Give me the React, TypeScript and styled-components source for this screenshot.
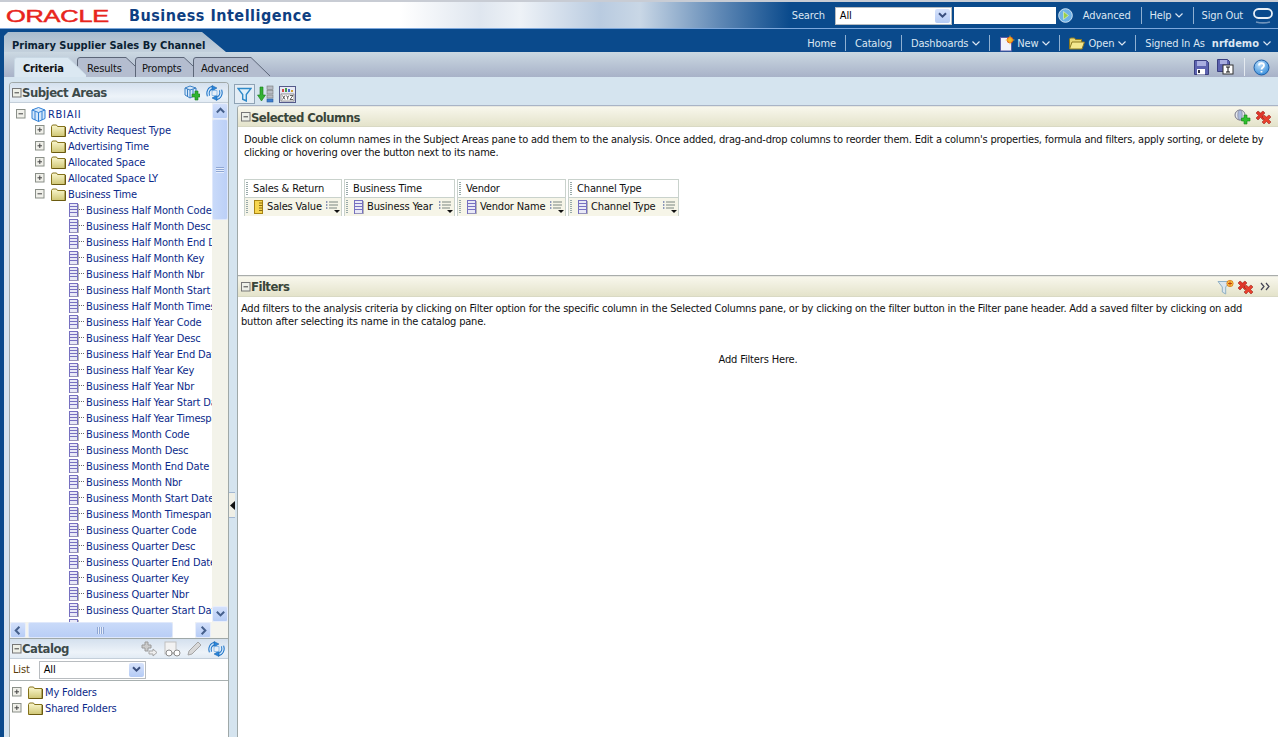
import React from "react";
import styled, { createGlobalStyle } from "styled-components";

const FONT = `"DejaVu Sans Condensed", "DejaVu Sans", sans-serif`;

const Global = createGlobalStyle`
  html, body { margin: 0; padding: 0; background: #0a4a8c; }
  body { font-family: ${FONT}; font-stretch: condensed; font-size: 11px; overflow: hidden; letter-spacing: -.15px; }
  * { box-sizing: border-box; }
`;

const Page = styled.div`
  width: 1278px; height: 737px; display: flex; flex-direction: column; overflow: hidden; background: #0a4a8c;
`;
const TopBar = styled.div`
  height: 29px; flex: none; display: flex; align-items: center; padding: 2px 0 1px 6px;
  border-top: 2px solid #c8ccd4; border-bottom: 1px solid #7ea8dc;
  background: linear-gradient(90deg, #fff 0, #fff 400px, #dfe6ef 480px, #eef2f7 520px, #b9cbe0 600px, #c9d7e6 640px, #5f88b5 720px, #0a4a8c 790px);
`;
const Logo = styled.svg`
  width: 105px; height: 18px; flex: none;
`;
const AppTitle = styled.div`
  margin-left: 18px; font-size: 16px; font-weight: bold; color: #0f3f82; letter-spacing: .5px; flex: 1;
`;
const TopLink = styled.span`
  color: #dbe6f2; font-size: 11px; white-space: nowrap;
`;
const SearchLabel = styled(TopLink)`margin-right: 10px;`;
const AdvancedLink = styled(TopLink)`margin-left: 10px;`;
const SelectBox = styled.div<{ $w: number; $h?: number }>`
  width: ${p => p.$w}px; height: ${p => p.$h ?? 18}px; flex: none; background: #fff; border: 1px solid #b8bcc0;
  display: flex; align-items: center; justify-content: space-between; padding: 0 1px 0 4px;
  font-size: 11px; color: #000;
`;
const SelectArrow = styled.span`
  width: 15px; height: 14px; display: flex; align-items: center; justify-content: center;
  background: linear-gradient(#d6e2fb, #b5cbf5); border-radius: 2px;
`;
const SearchInput = styled.div`
  width: 102px; height: 17px; background: #fff; margin-left: 2px; flex: none;
`;
const Sep = styled.span<{ $l?: number; $r?: number; $h?: number }>`
  width: 1px; height: ${p => p.$h ?? 17}px; background: #8fb0d2; flex: none;
  margin: 0 ${p => p.$r ?? 8}px 0 ${p => p.$l ?? 8}px;
`;
const TopRight = styled.div`display: flex; align-items: center; padding-right: 5px;`;
const NavRow = styled.div`
  height: 23px; flex: none; display: flex; justify-content: space-between; background: #0a4a8c;
`;
const TitleTab = styled.div`
  width: 226px; margin-left: 4px; margin-top: 3px; padding: 7px 0 0 8px;
  background: linear-gradient(#a9bccd, #c3d0dc);
  clip-path: polygon(0 4px, 4px 0, 198px 0, 222px 20px, 226px 20px, 0 20px);
  font-weight: bold; font-size: 11px; color: #0a1f33; white-space: nowrap; letter-spacing: 0;
`;
const NavLinks = styled.div`display: flex; align-items: center; padding-right: 7px; padding-top: 5px;`;
const NavText = styled.span`
  color: #dbe6f2; font-size: 11px; white-space: nowrap; display: inline-flex; align-items: center;
`;
const NavBold = styled.b`margin-left: 7px; color: #dbe6f2; letter-spacing: 0;`;
const TabRow = styled.div`
  height: 25px; flex: none; margin-left: 4px; display: flex; align-items: flex-end; justify-content: space-between;
  padding-left: 10px; background: linear-gradient(#cbd8e2, #a8b2c8);
`;
const Tabs = styled.div`display: flex; height: 20px;`;
const TabItem = styled.div<{ $w: number; $active?: boolean; $pad: number }>`
  position: relative; width: ${p => p.$w}px; padding: 5px 0 0 ${p => p.$pad}px; color: #111;
  font-weight: ${p => p.$active ? "bold" : "normal"}; font-size: 11px; white-space: nowrap;
  margin-right: ${p => p.$active ? "-9px" : "0"};
  z-index: ${p => p.$active ? 2 : 1};
`;
const TabShape = styled.svg`position: absolute; inset: 0; width: 100%; height: 100%; z-index: -1;`;
const TabIcons = styled.div`display: flex; align-items: center; height: 25px; padding-right: 8px; gap: 8px; padding-top: 5px;`;
const IconSep = styled.span`width: 1px; height: 18px; background: #e4eaf0; margin-left: 2px;`;

const Body = styled.div`
  flex: 1; min-height: 0; margin-left: 4px; background: #d5e4ef; display: flex; padding: 5px 0 0 5px;
`;
const LeftPanel = styled.div`
  width: 220px; flex: none; display: flex; flex-direction: column; background: #fff;
  border: 1px solid #9fa8a8; border-bottom: 0; border-radius: 4px 4px 0 0; overflow: hidden;
`;
const PaneHeader = styled.div<{ $h: number; $pr: number }>`
  height: ${p => p.$h}px; flex: none; display: flex; align-items: center; padding: 0 ${p => p.$pr}px 0 2px;
  background: linear-gradient(#d4e0ee, #edf3f9 70%, #e2ebf4); border-bottom: 1px solid #c4cfda;
`;
const PaneTitle = styled.span`
  font-size: 13px; font-weight: bold; color: #3d4a4a; margin-left: 0; flex: 1; white-space: nowrap;
  font-stretch: normal; letter-spacing: -.5px;
`;
const PaneIcons = styled.div<{ $gap: number }>`display: flex; align-items: center; gap: ${p => p.$gap}px;`;
const TreeWrap = styled.div`flex: none; height: 519px; display: flex; overflow: hidden;`;
const Tree = styled.div`flex: 1; min-width: 0; overflow: hidden; padding-top: 3px;`;
const Row = styled.div<{ $indent: number }>`
  height: 16px; display: flex; align-items: center; padding-left: ${p => p.$indent}px;
  color: #0b2a8a; font-size: 11px; white-space: nowrap;
`;
const RowLabel = styled.span`margin-left: 2px;`;
const RootLabel = styled(RowLabel)`letter-spacing: .7px;`;
const VScroll = styled.div`
  width: 16px; flex: none; display: flex; flex-direction: column; background: #f3f3ea;
`;
const SBtn = styled.div<{ $w?: number; $h?: number }>`
  width: ${p => p.$w ?? 16}px; height: ${p => p.$h ?? 16}px; flex: none; display: flex; align-items: center; justify-content: center;
  background: linear-gradient(#d3e0fb, #b7cdf6); border: 1px solid #e8eefb; border-radius: 2px;
`;
const VThumb = styled.div`
  height: 101px; flex: none; display: flex; align-items: center; justify-content: center;
  background: linear-gradient(90deg, #c9daf9, #bcd0f7); border: 1px solid #dfe8fb; border-radius: 2px;
`;
const VTrack = styled.div`flex: 1;`;
const HScroll = styled.div`
  height: 17px; flex: none; display: flex; align-items: center; background: #f4f4ee; padding-right: 17px; border-bottom: 1px solid #9fa8a8;
`;
const HThumb = styled.div`
  width: 145px; height: 16px; margin-left: 2px; display: flex; align-items: center; justify-content: center;
  background: linear-gradient(#c9daf9, #b9cef6); border: 1px solid #dfe8fb; border-radius: 2px;
`;
const HTrack = styled.div`flex: 1; background: #fff; align-self: stretch;`;
const Grip = styled.span<{ $v?: boolean }>`
  width: ${p => p.$v ? 8 : 7}px; height: ${p => p.$v ? 6 : 7}px;
  background: ${p => p.$v
    ? "repeating-linear-gradient(#8ea6d4 0 1px, #e6edfb 1px 2px)"
    : "repeating-linear-gradient(90deg, #8ea6d4 0 1px, #e6edfb 1px 2px)"};
`;
const ListRow = styled.div`
  height: 22px; flex: none; display: flex; align-items: center; padding-left: 3px; gap: 9px;
  border-bottom: 1px solid #a8b0b0; color: #5a3c08; font-size: 11px;
`;
const CatalogTree = styled.div`padding-top: 3px; flex: 1;`;
const Splitter = styled.div`
  width: 8px; flex: none; display: flex; align-items: flex-start; padding-top: 410px;
`;
const SplitHandle = styled.div`
  width: 6px; height: 26px; display: flex; align-items: center; justify-content: center; background: #efefe6;
  border-top: 1px solid #a3b8d2; border-bottom: 1px solid #a3b8d2;
`;
const RightCol = styled.div`flex: 1; min-width: 0; display: flex; flex-direction: column; margin-left: -4px;`;
const ToolBar = styled.div`
  height: 23px; flex: none; display: flex; align-items: center; gap: 2px; padding: 1px 0 0 1px;
`;
const ToolActive = styled.span`
  width: 21px; height: 20px; display: flex; align-items: center; justify-content: center;
  border: 1px solid #8fa3b5; background: #e4edf5;
`;
const RightPanel = styled.div`
  flex: 1; min-height: 0; margin-left: 4px; background: #fff; display: flex; flex-direction: column;
  border-left: 1px solid #9fa8a8; border-top: 1px solid #a9b4c6; border-radius: 4px 0 0 0; overflow: hidden;
`;
const BeigeHeader = styled.div<{ $pt: number }>`
  height: 21px; flex: none; display: flex; align-items: center; padding: ${p => p.$pt}px 6px 0 3px;
  background: linear-gradient(#f8f7ec, #e4e3cb); border-bottom: 1px solid #d9d9c4; border-top: 1px solid #e8e8e0;
`;
const BeigeTitle = styled.span`
  font-size: 13px; font-weight: bold; color: #39453a; flex: 1; margin-left: 0; font-stretch: normal; letter-spacing: -.55px;
`;
const Section = styled.div`height: 149px; flex: none; border-bottom: 1px solid #a9adab; padding: 6px 0 0 6px;`;
const Desc = styled.p`margin: 0; font-size: 11px; line-height: 13px; color: #111; white-space: nowrap; letter-spacing: -.2px;`;
const ColumnGrid = styled.div`display: flex; gap: 2px; margin-top: 20px;`;
const ColumnCard = styled.div<{ $w: number }>`
  width: ${p => p.$w}px; flex: none; border: 1px solid #c9d2cc; font-size: 11px; color: #111; height: 37px;
`;
const ColTop = styled.div`
  height: 18px; display: flex; align-items: center; padding-left: 8px; border-bottom: 1px solid #c9d2cc; position: relative;
  white-space: nowrap; background: #fff;
`;
const ColBottom = styled.div`
  height: 17.5px; display: flex; align-items: center; padding-left: 8px; gap: 3px; background: #f6f5e8; white-space: nowrap; position: relative;
`;
const DotGrip = styled.span`
  position: absolute; left: 1px; top: 2px; bottom: 2px; width: 2px;
  background: repeating-linear-gradient(#9aa 0 1px, transparent 1px 2px);
`;
const ColLabel = styled.span`flex: 1;`;
const MenuBtn = styled.span`margin-right: 1px; display: flex;`;
const FiltersBody = styled.div`flex: 1; padding: 5px 0 0 3px; position: relative;`;
const AddHere = styled.div`text-align: center; margin-top: 25px; color: #111; font-size: 11px; padding-right: 3px;`;

const Chev = ({ c = "#dbe6f2", m = 4 }: { c?: string; m?: number }) => (
  <svg width="8" height="5" viewBox="0 0 8 5" style={{ marginLeft: m }}><path d="M.5.5L4 4 7.500.5" fill="none" stroke={c} strokeWidth="1.200" /></svg>
);
const SelChev = () => (
  <svg width="9" height="7" viewBox="0 0 9 7"><path d="M1 1.200l3.500 3.500L8 1.200" fill="none" stroke="#3a4f7e" strokeWidth="2" /></svg>
);
const Expander = ({ open, m = 10 }: { open?: boolean; m?: number }) => (
  <svg width="10" height="10" viewBox="0 0 10 10" style={{ marginRight: m, flex: "none" }}>
    <rect x=".5" y=".5" width="8.500" height="8.500" fill="#f0f0ea" stroke="#8a8f88" />
    <path d={open ? "M2.500 4.800h4.500" : "M2.500 4.800h4.500M4.800 2.500v4.500"} stroke="#444" />
  </svg>
);
const Folder = () => (
  <svg width="15" height="13" viewBox="0 0 15 13" style={{ flex: "none" }}>
    <defs><linearGradient id="fg" x1="0" y1="0" x2="0" y2="1"><stop offset="0" stopColor="#fbf8cf" /><stop offset="1" stopColor="#cfc674" /></linearGradient></defs>
    <path d="M.5 2.500l1-1.500h4l1 1.500h7.500v10H.5z" fill="url(#fg)" stroke="#85721a" />
    <path d="M14.500 3v9.500H1.500" fill="none" stroke="#6a5a10" />
  </svg>
);
const ColumnIcon = ({ dots = true }: { dots?: boolean }) => (
  <svg width={dots ? 16 : 11} height="14" viewBox={`0 0 ${dots ? 16 : 11} 14`} style={{ flex: "none" }}>
    <rect x="1.500" y=".5" width="8" height="13" fill="#e9e9f7" stroke="#7670c0" />
    <path d="M1.500 3.500h8M1.500 6.500h8M1.500 9.500h8" stroke="#7670c0" />
    <path d="M10.500 1v13H2" fill="none" stroke="#b5b5b5" />
    {dots && <path d="M11 6.500h5" stroke="#666" strokeDasharray="1 1" />}
  </svg>
);
const MeasureIcon = () => (
  <svg width="11" height="14" viewBox="0 0 11 14" style={{ flex: "none" }}>
    <rect x="1.500" y=".5" width="8" height="13" fill="#f7d64f" stroke="#a88412" />
    <path d="M6 3h3.500M6 5.500h3.500M6 8h3.500M6 10.500h3.500" stroke="#8a6a10" />
  </svg>
);
const CubeIcon = () => (
  <svg width="15" height="15" viewBox="0 0 15 15" style={{ flex: "none" }}>
    <path d="M7.500.5l6.500 2.500v8.500l-6.500 3-6.500-3V3z" fill="#d6e8fb" stroke="#2f7fd4" />
    <path d="M1 3l6.500 2.500L14 3M7.500 5.500v9M4 4.500v8.500M11 4.500v8.500" fill="none" stroke="#2f7fd4" />
  </svg>
);
const AddCube = () => (
  <svg width="16" height="16" viewBox="0 0 16 16">
    <path d="M6 1l6 2v7l-6 3-5-3V3z" fill="#d6e8fb" stroke="#3a80c4" />
    <path d="M1 3l5 2 6-2M6 5v8M3.500 4v7M9 4v7" fill="none" stroke="#3a80c4" />
    <path d="M11 6v3H8v3h3v3h3v-3h2V9h-2V6z" fill="#2fb52f" stroke="#1b7a1b" strokeWidth=".6" />
  </svg>
);
const Refresh = () => (
  <svg width="17" height="16" viewBox="0 0 17 16">
    <path d="M2.500 11C1 7 3 3 7 2.500M14.500 5c1.500 4-.5 8-4.500 8.500" fill="none" stroke="#2276c8" strokeWidth="3.400" />
    <path d="M2.500 11C1 7 3 3 7 2.500M14.500 5c1.500 4-.5 8-4.500 8.500" fill="none" stroke="#cfe6fa" strokeWidth="1.400" />
    <path d="M6 .5l5 2.500-5 3zM11 15.500L6 13l5-3z" fill="#2a86dc" stroke="#145a9e" strokeWidth=".5" />
    <path d="M6 5.500h5v5H6z" fill="none" stroke="#7fb4e6" strokeWidth=".8" />
  </svg>
);
const Funnel = () => (
  <svg width="15" height="15" viewBox="0 0 15 15">
    <path d="M1 1.500h13L9.300 7.500v6.500l-3.600-1.800V7.500z" fill="#dff0fb" stroke="#2f8ac8" strokeWidth="1.400" />
  </svg>
);
const FilterAdd = () => (
  <svg width="18" height="16" viewBox="0 0 18 16">
    <path d="M1 2.500h12L8.700 8v7l-3.400-2V8z" fill="#dbe6ee" stroke="#8fb0c4" />
    <circle cx="13" cy="4.500" r="3.200" fill="#f5c542" stroke="#d96a12" strokeWidth=".7" />
    <path d="M13 2.500v4M11 4.500h4" stroke="#c43e10" />
  </svg>
);
const SortIcon = () => (
  <svg width="20" height="18" viewBox="0 0 20 18">
    <path d="M3 2h3v8h2.500L4.500 16 .5 10H3z" fill="#33b233" stroke="#1a7a1a" strokeWidth=".6" />
    <rect x="10" y="1" width="6" height="3.500" fill="#b8bcc4" stroke="#777" strokeWidth=".6" />
    <rect x="10" y="5.500" width="6" height="3.500" fill="#b8bcc4" stroke="#777" strokeWidth=".6" />
    <rect x="10" y="10" width="6" height="3" fill="#b8bcc4" stroke="#777" strokeWidth=".6" />
    <rect x="10" y="14" width="6" height="3" fill="#3f7fd0" stroke="#2a5a9a" strokeWidth=".6" />
  </svg>
);
const XyzIcon = () => (
  <svg width="17" height="17" viewBox="0 0 17 17">
    <rect x=".5" y=".5" width="16" height="16" fill="#e7e9f4" stroke="#545a8a" />
    <rect x="3" y="3" width="2" height="3" fill="#d04a4a" /><rect x="6" y="2" width="2" height="4" fill="#4a9a4a" />
    <rect x="9" y="3" width="2" height="3" fill="#4a6ad0" /><rect x="12" y="4" width="2" height="2" fill="#d0a030" />
    <rect x="2" y="8" width="13" height="7" fill="#fff" stroke="#333" strokeWidth=".5" />
    <path d="M3.500 9.500l2.500 4M6 9.500l-2.500 4M7.500 9.500l1.200 2 1.200-2M8.700 11.500v2M11 9.500h3l-3 4h3" fill="none" stroke="#222" strokeWidth=".7" />
  </svg>
);
const AddColumn = () => (
  <svg width="17" height="16" viewBox="0 0 17 16">
    <circle cx="6" cy="6" r="5" fill="#e4e9f0" stroke="#778" />
    <ellipse cx="6" cy="6" rx="2.200" ry="5" fill="#a9b9dc" stroke="#778" strokeWidth=".6" />
    <path d="M10 6v3H7.500v3H10v3h3v-3h3V9h-3V6z" fill="#2fc02f" stroke="#158015" strokeWidth=".6" />
  </svg>
);
const RemoveAll = () => (
  <svg width="17" height="14" viewBox="0 0 17 14">
    <path d="M1 3l2-2 2.500 2L8 1l2 2-2.500 2.500L10 8 8 10 5.500 7.500 3 10 1 8l2.500-2.500z" fill="#e0362a" stroke="#8f1a12" strokeWidth=".5" />
    <path d="M7 7l2-2 2.500 2L14 5l2 2-2.500 2.500L16 12l-2 2-2.500-2.500L9 14l-2-2 2.500-2.500z" fill="#e8402e" stroke="#8f1a12" strokeWidth=".5" />
  </svg>
);
const Collapse = () => (
  <svg width="10" height="10" viewBox="0 0 10 10" style={{ flex: "none" }}>
    <rect x=".5" y=".5" width="8.500" height="8.500" fill="#eef0e8" stroke="#777" />
    <path d="M2.500 4.800h4.500" stroke="#444" />
  </svg>
);
const Save = () => (
  <svg width="15" height="15" viewBox="0 0 15 15">
    <path d="M.5.5h12l2 2v12H.5z" fill="#5d63b0" stroke="#3a3f80" />
    <rect x="3" y="1" width="9" height="5" fill="#a9aee0" /><rect x="3" y="9" width="8" height="5.500" fill="#fff" /><rect x="4" y="10" width="2" height="3" fill="#334" />
  </svg>
);
const SaveAs = () => (
  <svg width="17" height="16" viewBox="0 0 17 16">
    <path d="M.5.5h10l2 2v10H.5z" fill="#5d63b0" stroke="#3a3f80" />
    <rect x="3" y="1" width="7" height="4" fill="#a9aee0" />
    <rect x="6" y="6" width="10" height="9" fill="#fff" stroke="#333" />
    <path d="M9 8h4M11 8v5M9 13h4" stroke="#111" />
  </svg>
);
const HelpIcon = () => (
  <svg width="17" height="17" viewBox="0 0 17 17">
    <defs><radialGradient id="hb" cx=".4" cy=".3" r=".8"><stop offset="0" stopColor="#bfe0fb" /><stop offset="1" stopColor="#2a86d8" /></radialGradient></defs>
    <circle cx="8.500" cy="8.500" r="7.500" fill="url(#hb)" stroke="#1d5fa8" />
    <path d="M6 6.500c0-3 5-3 5 0 0 2-2.500 2-2.500 4M8.500 12v1.500" fill="none" stroke="#fff" strokeWidth="1.800" />
  </svg>
);
const GoIcon = () => (
  <svg width="15" height="15" viewBox="0 0 15 15" style={{ marginLeft: 2, flex: "none" }}>
    <circle cx="7.500" cy="7.500" r="6.800" fill="#6fb2e6" stroke="#cfe4f6" />
    <path d="M5.500 3.500l5 4-5 4z" fill="#9ad04a" stroke="#e8f5d0" strokeWidth=".6" />
  </svg>
);
const OracleO = () => (
  <svg width="20" height="18" viewBox="0 0 20 18" style={{ marginLeft: 10 }}>
    <rect x="1" y="2" width="18" height="9" rx="4.500" fill="none" stroke="#e8eff6" strokeWidth="1.800" />
    <path d="M3 15c4 1 10 1 14 0" stroke="#6f93bb" strokeWidth="1.500" fill="none" />
  </svg>
);
const NewIcon = () => (
  <svg width="17" height="17" viewBox="0 0 17 17" style={{ marginRight: 1 }}>
    <rect x="1.500" y="2.500" width="11" height="13.500" fill="#f1f2fb" stroke="#5a5ea8" />
    <circle cx="11" cy="5" r="3" fill="#f0a020" stroke="#e04a10" strokeWidth=".7" />
    <path d="M11 .5v9M6.500 5h9" stroke="#f6d030" strokeWidth=".7" />
  </svg>
);
const OpenIcon = () => (
  <svg width="16" height="13" viewBox="0 0 16 13" style={{ marginRight: 3 }}>
    <path d="M.5 12V2l1-1h4l1 1.500h6V5" fill="#e8d878" stroke="#8d7a20" />
    <path d="M.5 12L3 5h12.500L13 12z" fill="#f4e88e" stroke="#8d7a20" />
  </svg>
);
const CatAdd = () => (
  <svg width="17" height="16" viewBox="0 0 17 16">
    <path d="M4 1h3v3h3v3H7v3H4V7H1V4h3z" fill="#ccc" stroke="#9a9a9a" />
    <path d="M8 10h4V8l4 3.500-4 3.500v-2H8z" fill="#eee" stroke="#a5a5a5" />
  </svg>
);
const CatView = () => (
  <svg width="17" height="16" viewBox="0 0 17 16">
    <rect x="1" y="1" width="11" height="12" fill="#f2f2f2" stroke="#c0c0c0" />
    <circle cx="5" cy="12" r="3" fill="#fff" stroke="#8a8a8a" /><circle cx="13" cy="12" r="3" fill="#fff" stroke="#8a8a8a" />
    <path d="M8 12h2" stroke="#8a8a8a" />
  </svg>
);
const CatEdit = () => (
  <svg width="15" height="15" viewBox="0 0 15 15">
    <path d="M1 14l1-4 9-9 3 3-9 9z" fill="#d8d8d8" stroke="#a5a5a5" />
  </svg>
);
const ColMenu = () => (
  <svg width="15" height="13" viewBox="0 0 15 13">
    <path d="M1 2h2M1 5h2M1 8h2" stroke="#223a8a" strokeWidth="1.200" strokeDasharray="1 .6" />
    <path d="M4 2h9M4 5h9M4 8h8" stroke="#7a8680" />
    <path d="M9 10h6l-3 3z" fill="#111" />
  </svg>
);
const ScrollArrow = ({ d }: { d: "up" | "down" | "left" | "right" }) => {
  const p = { up: "M2 7l4-4 4 4", down: "M2 3l4 4 4-4", left: "M7 2L3 6l4 4", right: "M4 2l4 4-4 4" }[d];
  return <svg width="11" height="11" viewBox="0 0 12 12"><path d={p} fill="none" stroke="#46608c" strokeWidth="2.200" /></svg>;
};
const TabPath = ({ w, slope, fill, stroke }: { w: number; slope: number; fill: string; stroke: string }) => (
  <TabShape viewBox={`0 0 ${w} 20`} preserveAspectRatio="none">
    <path d={`M.5 20V3Q.5 .5 3 .5H${w - slope}L${w} ${slope}V20z`} fill={fill} />
    <path d={`M.5 20V3Q.5 .5 3 .5H${w - slope}L${w} ${slope}`} fill="none" stroke={stroke} />
  </TabShape>
);

const businessTime = [
  "Business Half Month Code", "Business Half Month Desc", "Business Half Month End Date", "Business Half Month Key",
  "Business Half Month Nbr", "Business Half Month Start Date", "Business Half Month Timespan", "Business Half Year Code",
  "Business Half Year Desc", "Business Half Year End Date", "Business Half Year Key", "Business Half Year Nbr",
  "Business Half Year Start Date", "Business Half Year Timespan", "Business Month Code", "Business Month Desc",
  "Business Month End Date", "Business Month Nbr", "Business Month Start Date", "Business Month Timespan",
  "Business Quarter Code", "Business Quarter Desc", "Business Quarter End Date", "Business Quarter Key",
  "Business Quarter Nbr", "Business Quarter Start Date", "Business Quarter Timespan",
];
const folders = ["Activity Request Type", "Advertising Time", "Allocated Space", "Allocated Space LY"];
const columns = [
  { group: "Sales & Return", name: "Sales Value", w: 98, measure: true },
  { group: "Business Time", name: "Business Year", w: 111 },
  { group: "Vendor", name: "Vendor Name", w: 109 },
  { group: "Channel Type", name: "Channel Type", w: 111 },
];

export default function App() {
  return (
    <Page>
      <Global />
      <TopBar>
        <Logo viewBox="0 0 105 18">
          <text x="0" y="15" fontFamily="Liberation Sans" fontSize="17" fill="#e8251c" stroke="#e8251c" strokeWidth=".5" textLength="103" lengthAdjust="spacingAndGlyphs">ORACLE</text>
        </Logo>
        <AppTitle>Business Intelligence</AppTitle>
        <TopRight>
          <SearchLabel>Search</SearchLabel>
          <SelectBox $w={117}>All<SelectArrow><SelChev /></SelectArrow></SelectBox>
          <SearchInput />
          <GoIcon />
          <AdvancedLink>Advanced</AdvancedLink>
          <Sep $l={10} />
          <TopLink>Help</TopLink><Chev m={3} />
          <Sep $l={10} />
          <TopLink>Sign Out</TopLink>
          <OracleO />
        </TopRight>
      </TopBar>
      <NavRow>
        <TitleTab>Primary Supplier Sales By Channel</TitleTab>
        <NavLinks>
          <NavText>Home</NavText><Sep $l={9} $r={9} $h={16} />
          <NavText>Catalog</NavText><Sep $l={9} $r={9} $h={16} />
          <NavText>Dashboards<Chev /></NavText><Sep $l={9} $r={9} $h={16} />
          <NavText><NewIcon />New<Chev /></NavText><Sep $l={9} $r={9} $h={16} />
          <NavText><OpenIcon />Open<Chev /></NavText><Sep $l={9} $r={9} $h={16} />
          <NavText>Signed In As<NavBold>nrfdemo</NavBold><Chev /></NavText>
        </NavLinks>
      </NavRow>
      <TabRow>
        <Tabs>
          <TabItem $w={72} $pad={9} $active><TabPath w={72} slope={18} fill="#dbe8f2" stroke="#c8d8e4" />Criteria</TabItem>
          <TabItem $w={58} $pad={10}><TabPath w={58} slope={9} fill="#b4bdcf" stroke="#5c6678" />Results</TabItem>
          <TabItem $w={58} $pad={7}><TabPath w={58} slope={9} fill="#b4bdcf" stroke="#5c6678" />Prompts</TabItem>
          <TabItem $w={77} $pad={8}><TabPath w={77} slope={19} fill="#b4bdcf" stroke="#5c6678" />Advanced</TabItem>
        </Tabs>
        <TabIcons><Save /><SaveAs /><IconSep /><HelpIcon /></TabIcons>
      </TabRow>
      <Body>
        <LeftPanel>
          <PaneHeader $h={20} $pr={5}>
            <Collapse /><PaneTitle>Subject Areas</PaneTitle>
            <PaneIcons $gap={6}><AddCube /><Refresh /></PaneIcons>
          </PaneHeader>
          <TreeWrap>
            <Tree>
              <Row $indent={6}><Expander open m={5} /><CubeIcon /><RootLabel>RBIAII</RootLabel></Row>
              {folders.map(f => (
                <Row $indent={25} key={f}><Expander m={6} /><Folder /><RowLabel>{f}</RowLabel></Row>
              ))}
              <Row $indent={25}><Expander open m={6} /><Folder /><RowLabel>Business Time</RowLabel></Row>
              {businessTime.map(c => (
                <Row $indent={58} key={c}><ColumnIcon /><RowLabel>{c}</RowLabel></Row>
              ))}
            </Tree>
            <VScroll>
              <SBtn><ScrollArrow d="up" /></SBtn>
              <VThumb><Grip $v /></VThumb>
              <VTrack />
              <SBtn><ScrollArrow d="down" /></SBtn>
            </VScroll>
          </TreeWrap>
          <HScroll>
            <SBtn><ScrollArrow d="left" /></SBtn>
            <HThumb><Grip /></HThumb>
            <HTrack />
            <SBtn><ScrollArrow d="right" /></SBtn>
          </HScroll>
          <PaneHeader $h={20} $pr={3}>
            <Collapse /><PaneTitle>Catalog</PaneTitle>
            <PaneIcons $gap={6}><CatAdd /><CatView /><CatEdit /><Refresh /></PaneIcons>
          </PaneHeader>
          <ListRow>List<SelectBox $w={107}>All<SelectArrow><SelChev /></SelectArrow></SelectBox></ListRow>
          <CatalogTree>
            <Row $indent={2}><Expander m={6} /><Folder /><RowLabel>My Folders</RowLabel></Row>
            <Row $indent={2}><Expander m={6} /><Folder /><RowLabel>Shared Folders</RowLabel></Row>
          </CatalogTree>
        </LeftPanel>
        <Splitter>
          <SplitHandle>
            <svg width="5" height="9" viewBox="0 0 5 9"><path d="M5 0v9L0 4.500z" fill="#111" /></svg>
          </SplitHandle>
        </Splitter>
        <RightCol>
          <ToolBar>
            <ToolActive><Funnel /></ToolActive><SortIcon /><XyzIcon />
          </ToolBar>
          <RightPanel>
            <BeigeHeader $pt={1}>
              <Collapse /><BeigeTitle>Selected Columns</BeigeTitle>
              <PaneIcons $gap={4}><AddColumn /><RemoveAll /></PaneIcons>
            </BeigeHeader>
            <Section>
              <Desc>
                Double click on column names in the Subject Areas pane to add them to the analysis. Once added, drag-and-drop columns to reorder them. Edit a column's properties, formula and filters, apply sorting, or delete by<br />
                clicking or hovering over the button next to its name.
              </Desc>
              <ColumnGrid>
                {columns.map(c => (
                  <ColumnCard $w={c.w} key={c.name}>
                    <ColTop><DotGrip />{c.group}</ColTop>
                    <ColBottom>
                      <DotGrip />
                      {c.measure ? <MeasureIcon /> : <ColumnIcon dots={false} />}
                      <ColLabel>{c.name}</ColLabel>
                      <MenuBtn><ColMenu /></MenuBtn>
                    </ColBottom>
                  </ColumnCard>
                ))}
              </ColumnGrid>
            </Section>
            <BeigeHeader $pt={0}>
              <Collapse /><BeigeTitle>Filters</BeigeTitle>
              <PaneIcons $gap={2}>
                <FilterAdd /><RemoveAll />
                <svg width="12" height="9" viewBox="0 0 12 9" style={{ marginLeft: 4 }}><path d="M1 1l3 3.500L1 8M6 1l3 3.500L6 8" fill="none" stroke="#445" strokeWidth="1.200" /></svg>
              </PaneIcons>
            </BeigeHeader>
            <FiltersBody>
              <Desc>
                Add filters to the analysis criteria by clicking on Filter option for the specific column in the Selected Columns pane, or by clicking on the filter button in the Filter pane header. Add a saved filter by clicking on add<br />
                button after selecting its name in the catalog pane.
              </Desc>
              <AddHere>Add Filters Here.</AddHere>
            </FiltersBody>
          </RightPanel>
        </RightCol>
      </Body>
    </Page>
  );
}
